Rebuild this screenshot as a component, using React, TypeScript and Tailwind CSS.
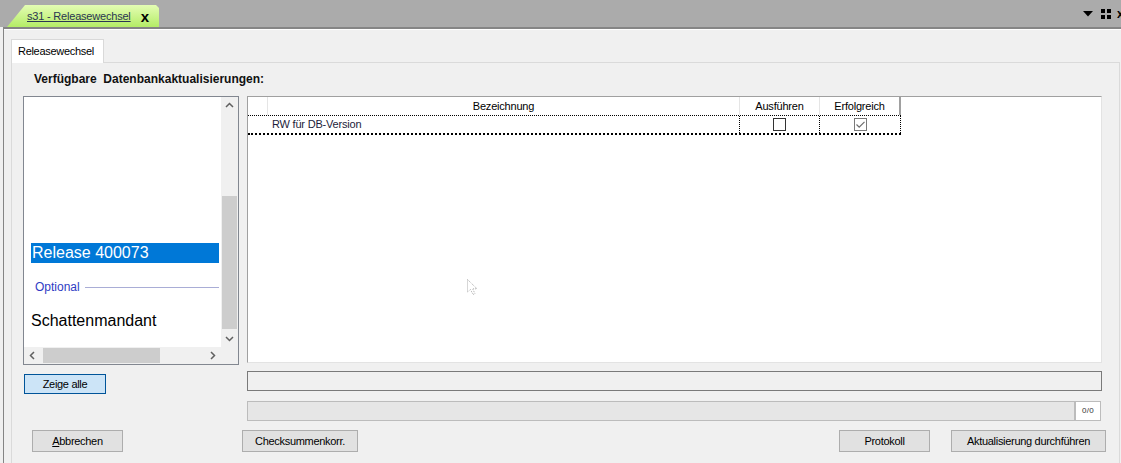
import React from "react";

function Chevron({ dir }: { dir: "up" | "down" | "left" | "right" }) {
  const pts = {
    up: "1,6 4.5,2.5 8,6",
    down: "1,3 4.5,6.5 8,3",
    left: "6,1 2.5,4.5 6,8",
    right: "3,1 6.5,4.5 3,8",
  }[dir];
  return (
    <svg width="9" height="9" viewBox="0 0 9 9">
      <polyline points={pts} fill="none" stroke="#606060" strokeWidth="1.5" />
    </svg>
  );
}

function Btn({ label, w, className = "" }: { label: React.ReactNode; w: string; className?: string }) {
  return (
    <div
      className={`${w} ${className} h-[22px] shrink-0 bg-[#e1e1e1] border border-[#adadad] flex items-center justify-center text-[11px] tracking-[-0.3px] text-black`}
    >
      {label}
    </div>
  );
}

export default function App() {
  return (
    <div className="w-[1121px] h-[463px] overflow-hidden bg-[#f0f0f0] font-['Liberation_Sans',Arial,sans-serif] text-black">
      {/* top document tab bar */}
      <div className="h-[27px] bg-[#ababab] flex items-end">
        <div className="ml-[7px] h-[22px] w-[152px] shrink-0 bg-[linear-gradient(to_bottom,#e4fdb4,#b4ec66)] [clip-path:polygon(0_22px,18px_0,149px_0,152px_3px,152px_22px)] flex items-center">
          <span className="ml-[20px] text-[11px] tracking-[-0.2px] text-[#2a3552] underline leading-none">
            s31 - Releasewechsel
          </span>
          <span className="ml-[10px] text-[15px] font-bold leading-none">x</span>
        </div>
        <div className="ml-auto mr-[-4px] self-center flex items-center shrink-0">
          <svg width="10" height="6" viewBox="0 0 10 6">
            <polygon points="0,0 10,0 5,5.5" fill="#000" />
          </svg>
          <svg width="10" height="10" viewBox="0 0 10 10" className="ml-[8px]">
            <rect x="0" y="0" width="4" height="4" fill="#000" />
            <rect x="6" y="0" width="4" height="4" fill="#000" />
            <rect x="0" y="6" width="4" height="4" fill="#000" />
            <rect x="6" y="6" width="4" height="4" fill="#000" />
          </svg>
          <span className="ml-[6px] w-[8px] text-[12px] font-bold leading-none">x</span>
        </div>
      </div>

      {/* body frame */}
      <div className="ml-[3px] h-[436px] border-l border-t-2 border-[#858585]">
        <div className="h-full border-t border-white pl-[7px] pt-[9px]">
          {/* inner tab */}
          <div className="relative z-10 w-[93px] h-[24px] bg-white border border-b-0 border-[#d9d9d9] flex items-center pl-[6px] text-[11px] tracking-[-0.3px]">
            Releasewechsel
          </div>
          <div className="-mt-px w-[1109px] h-[420px] border border-[#dadada]">
            <div className="pt-[8px] ml-[22px] text-[12px] leading-[16px] font-bold whitespace-pre text-[#111]">
              {"Verfügbare  Datenbankaktualisierungen:"}
            </div>

            {/* main row */}
            <div className="mt-[9px] ml-[11px] flex items-start gap-[8px]">
              {/* left column */}
              <div className="w-[216px] shrink-0">
                <div className="h-[269px] border border-[#828790] bg-white flex flex-col">
                  <div className="flex h-[250px]">
                    <div className="flex-1 pt-[146px] pl-[7px] overflow-hidden">
                      <div className="h-[20px] w-[188px] bg-[#0078d7] text-white text-[16px] leading-[20px] pl-px whitespace-nowrap">
                        Release 400073
                      </div>
                      <div className="mt-[16px] h-[16px] w-[188px] flex items-center pl-[4px]">
                        <span className="text-[12px] leading-none text-[#2f3cc4]">Optional</span>
                        <div className="ml-[5px] flex-1 h-px bg-[#a9add6]" />
                      </div>
                      <div className="mt-[16px] h-[20px] text-[16px] leading-[20px] whitespace-nowrap">
                        Schattenmandant
                      </div>
                    </div>
                    <div className="w-[17px] bg-[#f0f0f0] flex flex-col">
                      <div className="h-[17px] flex items-center justify-center">
                        <Chevron dir="up" />
                      </div>
                      <div className="flex-1 flex flex-col">
                        <div className="h-[82px]" />
                        <div className="h-[133px] mx-px bg-[#cdcdcd]" />
                      </div>
                      <div className="h-[17px] flex items-center justify-center">
                        <Chevron dir="down" />
                      </div>
                    </div>
                  </div>
                  <div className="h-[17px] flex bg-[#f0f0f0]">
                    <div className="w-[17px] flex items-center justify-center">
                      <Chevron dir="left" />
                    </div>
                    <div className="w-[163px] flex items-stretch py-px">
                      <div className="ml-[2px] w-[117px] bg-[#cdcdcd]" />
                    </div>
                    <div className="w-[17px] flex items-center justify-center">
                      <Chevron dir="right" />
                    </div>
                    <div className="flex-1" />
                  </div>
                </div>
                <div className="mt-[9px] ml-px w-[82px] h-[20px] bg-[#cce4f7] border border-[#005499] flex items-center justify-center text-[11px] tracking-[-0.3px]">
                  Zeige alle
                </div>
              </div>

              {/* right column */}
              <div className="w-[855px] shrink-0">
                <div className="relative h-[267px] bg-white border-t border-l border-[#a0a0a0] border-b border-r border-b-[#e3e3e3] border-r-[#e3e3e3]">
                  {/* header */}
                  <div className="flex h-[19px] border-b border-dotted border-black w-[653px] text-[11px] tracking-[-0.2px]">
                    <div className="w-[20px] border-r border-[#e5e5e5]" />
                    <div className="w-[472px] border-r border-[#e5e5e5] flex items-center justify-center">
                      Bezeichnung
                    </div>
                    <div className="w-[80px] border-r border-[#e5e5e5] flex items-center justify-center">
                      Ausführen
                    </div>
                    <div className="w-[81px] border-r-2 border-[#a0a0a0] flex items-center justify-center">
                      Erfolgreich
                    </div>
                  </div>
                  {/* data row */}
                  <div className="flex h-[19px] w-[653px] border-b-2 border-dotted border-black text-[11px] tracking-[-0.2px]">
                    <div className="w-[20px]" />
                    <div className="w-[472px] border-r border-dotted border-black flex items-center pl-[4px] text-[#1c1c3a]">
                      RW für DB-Version
                    </div>
                    <div className="w-[80px] border-r border-dotted border-black flex items-center justify-center">
                      <div className="w-[13px] h-[13px] border border-[#333] bg-white" />
                    </div>
                    <div className="w-[81px] border-r border-dotted border-black flex items-center justify-center">
                      <div className="w-[13px] h-[13px] border border-[#7a7a7a] bg-white flex items-center justify-center">
                        <svg width="11" height="11" viewBox="0 0 11 11">
                          <polyline points="1.5,5.5 4.2,8.2 9.5,2.8" fill="none" stroke="#6e6e6e" strokeWidth="1.2" />
                        </svg>
                      </div>
                    </div>
                  </div>
                  {/* mouse cursor */}
                  <svg
                    className="absolute left-[219px] top-[182px]"
                    width="12"
                    height="18"
                    viewBox="0 0 12 18"
                  >
                    <path
                      d="M0.5,0.5 L0.5,13 L3.5,10.5 L6,15.5 L8,14.5 L5.5,9.8 L10,9.8 Z"
                      fill="none"
                      stroke="#9a9a9a"
                      strokeWidth="0.8"
                      strokeDasharray="1 1"
                    />
                  </svg>
                </div>
                <div className="mt-[8px] h-[20px] border border-[#7a7a7a] bg-[#f0f0f0]" />
                <div className="mt-[10px] h-[20px] flex">
                  <div className="w-[828px] bg-[#e6e6e6] border border-[#bcbcbc]" />
                  <div className="w-[26px] bg-white border border-[#bcbcbc] flex items-center justify-center text-[8px] text-[#333] tracking-[0.3px]">
                    0/0
                  </div>
                </div>
              </div>
            </div>

            {/* bottom buttons */}
            <div className="mt-[9px] pl-[20px] flex">
              <Btn
                w="w-[91px]"
                label={
                  <span>
                    <span className="underline">A</span>bbrechen
                  </span>
                }
              />
              <Btn w="w-[116px]" className="ml-[119px]" label="Checksummenkorr." />
              <Btn w="w-[91px]" className="ml-[481px]" label="Protokoll" />
              <Btn w="w-[155px]" className="ml-[21px]" label="Aktualisierung durchführen" />
            </div>
          </div>
        </div>
      </div>
    </div>
  );
}
